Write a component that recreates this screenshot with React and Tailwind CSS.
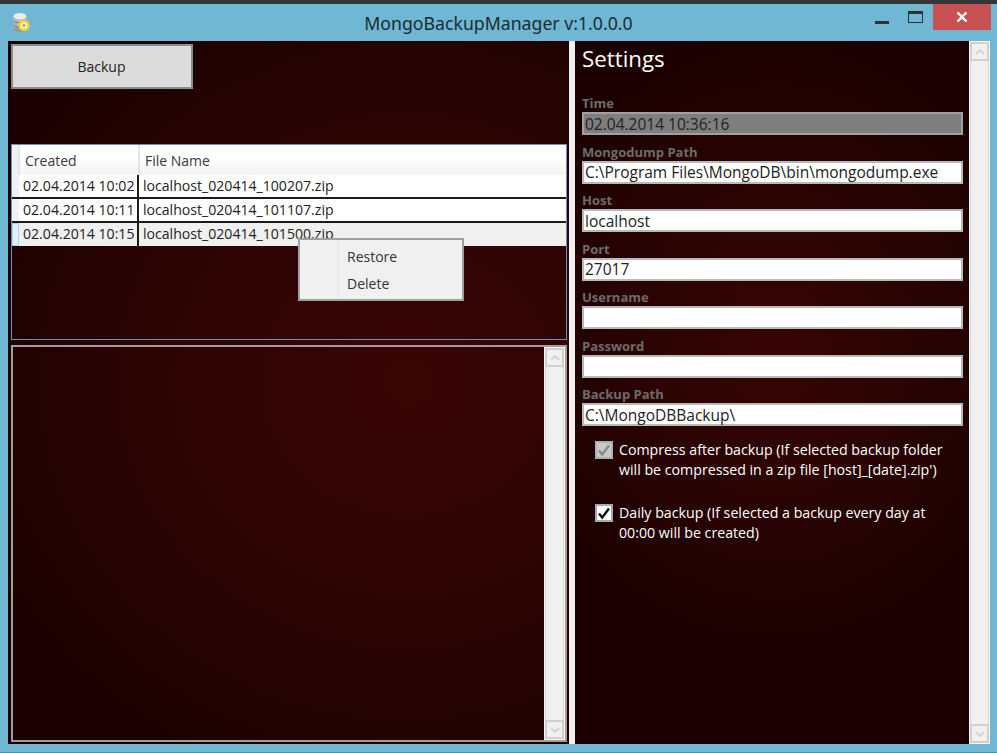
const fields = [
  { label: 'Mongodump Path', value: 'C:\\Program Files\\MongoDB\\bin\\mongodump.exe' },
  { label: 'Host', value: 'localhost' },
  { label: 'Port', value: '27017' },
  { label: 'Username', value: '' },
  { label: 'Password', value: '' },
  { label: 'Backup Path', value: 'C:\\MongoDBBackup\\' },
];

const rows = [
  { created: '02.04.2014 10:02', file: 'localhost_020414_100207.zip' },
  { created: '02.04.2014 10:11', file: 'localhost_020414_101107.zip' },
  { created: '02.04.2014 10:15', file: 'localhost_020414_101500.zip', selected: true },
];

function AppIcon() {
  return (
    <svg width="17" height="19" viewBox="0 0 17 19">
      <rect x="0.5" y="3" width="13" height="13" fill="#b8b8b8" />
      <ellipse cx="7" cy="3.2" rx="6.5" ry="3.2" fill="#ececec" />
      <path d="M.5 8c2 2.4 11 2.4 13 0M.5 12c2 2.4 11 2.4 13 0" stroke="#777" fill="none" />
      <ellipse cx="7" cy="16" rx="6.5" ry="2.8" fill="#999" />
      <circle cx="11" cy="12.5" r="5.6" fill="#f2d52f" />
      <circle cx="11" cy="12.5" r="3.2" fill="#fff4a8" />
      <circle cx="11" cy="12.5" r="1.3" fill="#8f8f8f" />
    </svg>
  );
}

function Scrollbar({ className }) {
  return (
    <div className={`flex flex-col justify-between bg-[#f0f0f0] border-[1px] border-[#f7f7f7] ${className}`}>
      <div className="h-[19px] border-2 border-[#d3d0cc] flex items-center justify-center">
        <svg width="10" height="6" viewBox="0 0 10 6"><path d="M1 5l4-4 4 4" stroke="#d4d4d4" strokeWidth="2" fill="none" /></svg>
      </div>
      <div className="flex-1 border-x-[1px] border-[#d9d7d4]" />
      <div className="h-[19px] border-2 border-[#d3d0cc] flex items-center justify-center">
        <svg width="10" height="6" viewBox="0 0 10 6"><path d="M1 1l4 4 4-4" stroke="#d4d4d4" strokeWidth="2" fill="none" /></svg>
      </div>
    </div>
  );
}

function Field({ label, value, disabled }) {
  return (
    <div className="flex flex-col">
      <div className="h-[25.55px] flex items-end pb-[1px] text-[13px] leading-[16px] font-bold text-[#6f6a6a]">{label}</div>
      <div className={`h-[23px] border-2 flex items-center px-[1px] pt-[2px] text-[15.5px] leading-none text-[#222] whitespace-nowrap ${disabled ? 'bg-[#7e7e7e] border-[#a0a0a0] text-[#2b2b2b]' : 'bg-white border-[#b9b9b9]'}`}>
        {value}
      </div>
    </div>
  );
}

function Check({ disabled }) {
  return (
    <div className={`w-[18px] h-[18px] shrink-0 mt-[1px] flex items-center justify-center border-2 ${disabled ? 'bg-[#c9c9c9] border-[#b0b0b0]' : 'bg-white border-[#a9a9a9]'}`}>
      <svg width="14" height="14" viewBox="0 0 14 14">
        <path d="M2 7.5l3.2 4L12 2.5" stroke={disabled ? '#8a8a8a' : '#111'} strokeWidth="2.4" fill="none" />
      </svg>
    </div>
  );
}

export default function App() {
  return (
    <div className="w-[997px] h-[753px] overflow-hidden flex flex-col bg-[#6fb7d3] font-['Open_Sans','Noto_Sans',sans-serif]">
      <div className="h-[4px] bg-[#333637] shrink-0" />

      {/* TITLE BAR */}
      <div className="h-[37px] shrink-0 relative flex justify-center pt-[6px]">
        <div className="absolute left-[13px] top-[9px]"><AppIcon /></div>
        <span className="text-[17.7px] leading-[26px] text-[#1c2b33] font-['Noto_Sans',sans-serif]">MongoBackupManager v:1.0.0.0</span>
        <div className="absolute right-[108px] top-[17px] w-[14px] h-[3px] bg-[#26333a]" />
        <div className="absolute right-[74px] top-[7px] w-[15px] h-[12px] border-[1px] border-t-[3px] border-[#26333a]" />
        <div className="absolute right-[6px] top-0 w-[58px] h-[26px] bg-[#c75050] flex items-center justify-center">
          <svg width="12" height="10" viewBox="0 0 12 10"><path d="M1.5 .5l9 9M10.5 .5l-9 9" stroke="#fff" strokeWidth="2.4" /></svg>
        </div>
      </div>

      {/* CONTENT */}
      <div className="ml-[8px] mr-[7px] h-[703px] shrink-0 flex">
        {/* LEFT PANEL */}
        <div className="relative w-[561px] shrink-0 flex flex-col pl-[3px] pr-[2px] pt-[3px] pb-[2px] bg-[radial-gradient(ellipse_480px_440px_at_400px_340px,#3a0606_0%,#2c0404_55%,#1a0000_100%)]">
          <button className="w-[182px] h-[45px] shrink-0 bg-[#dcdcdc] border-2 border-[#8c8c8c] text-[14px] text-[#222] pb-[1px] pr-[1px]">Backup</button>

          {/* FILE LIST */}
          <div className="mt-[55px] h-[196px] shrink-0 border-[1px] border-[#6d90b8]">
            <div className="flex h-[30px] text-[14px] text-[#3a3a3a] bg-[linear-gradient(#ffffff_40%,#f3f3f3)]">
              <div className="w-[8px] bg-[#eef0f2] border-r-2 border-[#e6e6e6]" />
              <div className="w-[120px] border-r-2 border-[#e4e4e4] pl-[5px] flex items-center">Created</div>
              <div className="flex-1 pl-[5px] flex items-center">File Name</div>
            </div>
            {rows.map((row) => (
              <div key={row.file} className={`flex text-[14.1px] leading-none text-[#222] ${row.selected ? 'bg-[#f0f0f0] h-[23px]' : 'h-[24px] bg-white border-b-2 border-[#1b1b1b]'}`}>
                <div className={`w-[7px] shrink-0 ${row.selected ? 'bg-[#e2f0fb] border-[1px] border-[#a9d3f2]' : 'bg-[#f0f1f2]'}`} />
                <div className="w-[120px] shrink-0 border-r-2 border-[#1b1b1b] pl-[4px] flex items-center whitespace-nowrap">{row.created}</div>
                <div className="pl-[4px] flex items-center">{row.file}</div>
              </div>
            ))}
          </div>

          {/* LOG BOX */}
          <div className="mt-[5px] flex-1 border-2 border-[#a39c9c] flex justify-end">
            <Scrollbar className="w-[21px] h-full" />
          </div>

          {/* CONTEXT MENU */}
          <div className="absolute left-[290px] top-[197px] w-[166px] h-[63px] bg-[#f0f0f0] border-2 border-[#a0a0a0] flex text-[14px] text-[#333]">
            <div className="w-[39px] border-r-[1px] border-[#e6e6e6]" />
            <div className="pl-[8px] pt-[3px] flex flex-col">
              <span className="h-[27px] leading-[27px]">Restore</span>
              <span className="h-[27px] leading-[27px]">Delete</span>
            </div>
          </div>
        </div>

        {/* SPLITTER */}
        <div className="w-[6px] shrink-0 bg-[#f0f0f0]" />

        {/* RIGHT PANEL */}
        <div className="flex-1 flex bg-[radial-gradient(ellipse_280px_320px_at_200px_300px,#380505_0%,#280303_55%,#1a0000_100%)]">
          <div className="flex-1 pl-[7px] pr-[6px]">
            <div className="h-[37px] text-[22.3px] leading-[35px] text-white">Settings</div>
            <div className="mt-[8.5px]">
              <Field label="Time" value="02.04.2014 10:36:16" disabled />
              {fields.map((f) => (
                <Field key={f.label} label={f.label} value={f.value} />
              ))}
            </div>
            <div className="pl-[13px] pt-[14px] flex flex-col gap-[23px] text-[14.2px] leading-[20px] text-white">
              <div className="flex gap-[6px]">
                <Check disabled />
                <span>Compress after backup (If selected backup folder<br />will be compressed in a zip file [host]_[date].zip')</span>
              </div>
              <div className="flex gap-[6px]">
                <Check />
                <span>Daily backup (If selected a backup every day at<br />00:00 will be created)</span>
              </div>
            </div>
          </div>
          <Scrollbar className="w-[21px] h-full" />
        </div>
      </div>
      <div className="flex-1 border-b-[1px] border-[#4f8ea6]" />
    </div>
  );
}
